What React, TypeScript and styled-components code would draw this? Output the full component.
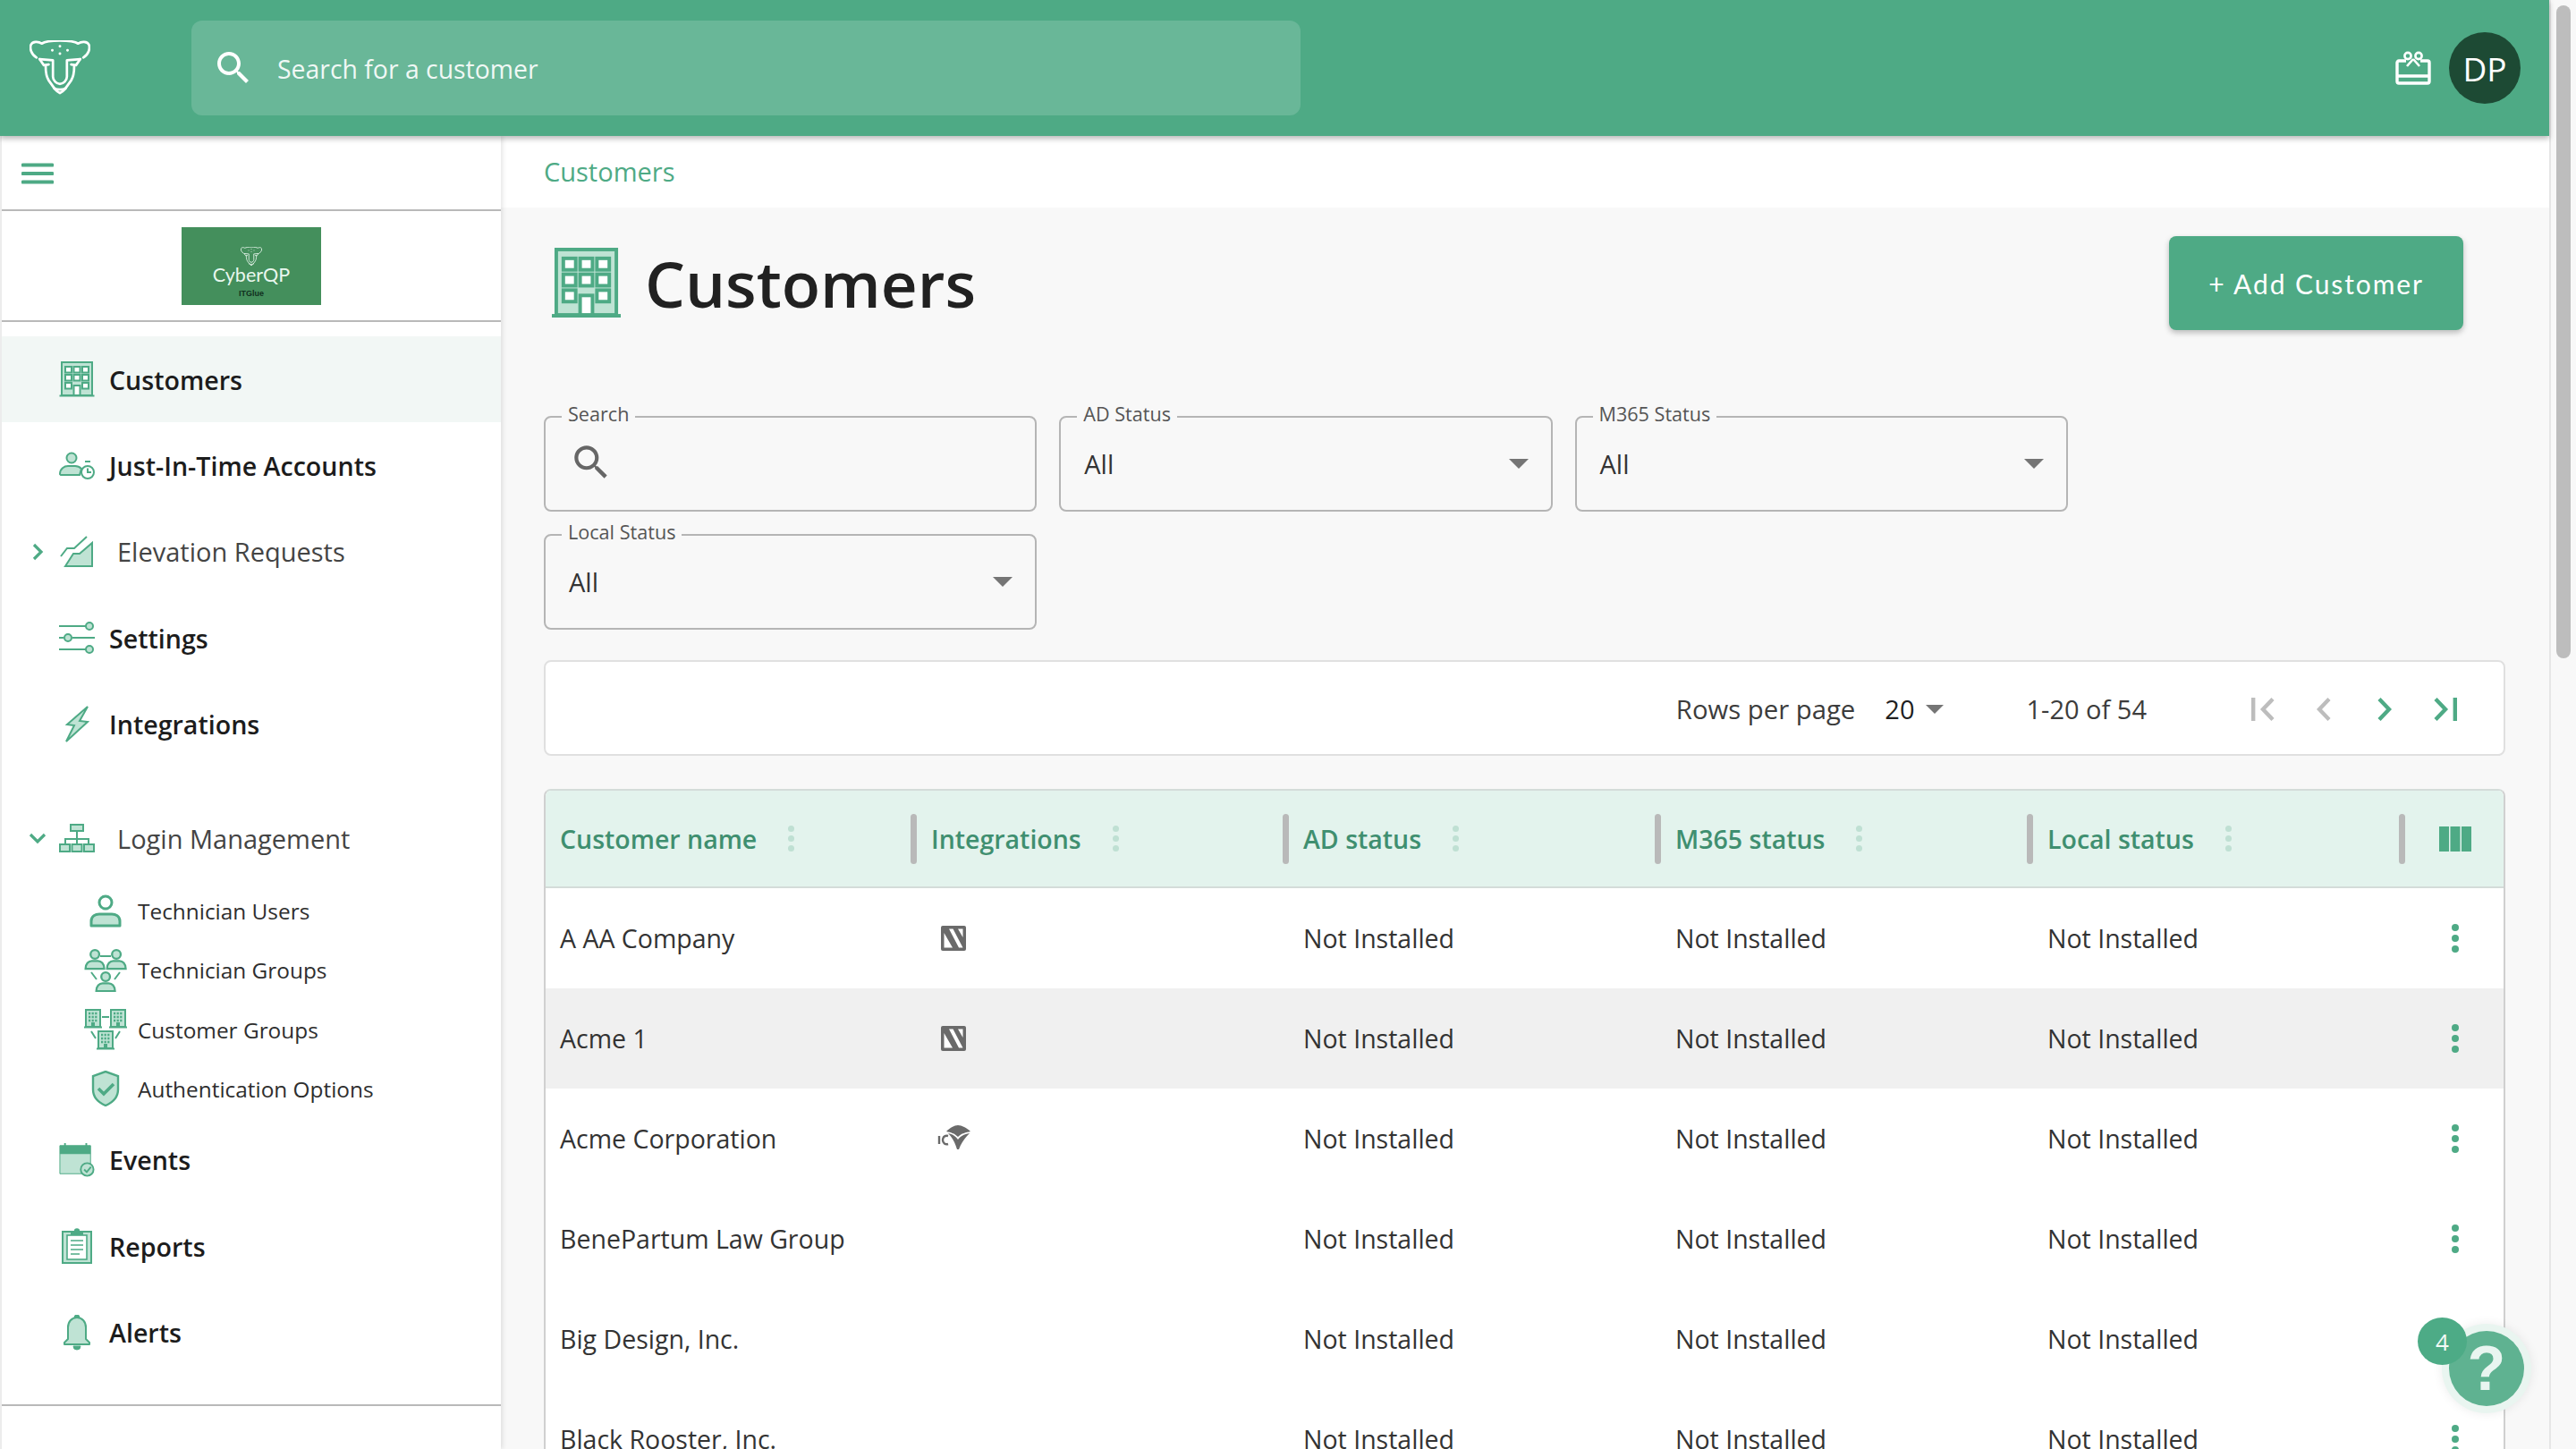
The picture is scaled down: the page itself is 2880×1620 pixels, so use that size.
import React from "react";
import styled, { createGlobalStyle } from "styled-components";

const GREEN = "#4eaa85";
const TINT = "#bfe3d4";

const Global = createGlobalStyle`
  html, body { margin: 0; padding: 0; width: 2880px; height: 1620px; overflow: hidden; background: #f8f8f8; }
  * { box-sizing: border-box; }
  body { font-family: "Open Sans", "Liberation Sans", sans-serif; }
`;

const Shell = styled.div`
  position: relative;
  display: flex;
  width: 2880px;
  height: 1620px;
  overflow: hidden;
`;
const Viewport = styled.div`
  width: 2850px;
  display: flex;
  flex-direction: column;
  height: 1620px;
`;
const ScrollTrack = styled.div`
  width: 30px;
  background: #f8f8f8;
  border-left: 2px solid #e6e6e6;
  padding: 6px 6px 0 6px;
`;
const ScrollThumb = styled.div`
  width: 16px;
  height: 730px;
  border-radius: 8px;
  background: #bdbdbd;
`;
const TopBar = styled.header`
  flex: 0 0 152px;
  height: 152px;
  background: ${GREEN};
  display: flex;
  align-items: center;
  padding: 0 32px 0 33px;
  box-shadow: 0 3px 6px rgba(0, 0, 0, 0.28);
  position: relative;
  z-index: 2;
`;
const LogoSlot = styled.div`
  width: 181px;
  display: flex;
`;
const SearchBar = styled.div`
  width: 1240px;
  height: 106px;
  background: #69b798;
  border-radius: 12px;
  display: flex;
  align-items: center;
  padding-left: 23px;
  gap: 25px;
  color: #fff;
  font-size: 28.4px;
  svg { flex: none; }
`;
const Placeholder = styled.span`
  color: rgba(255, 255, 255, 0.92);
  padding-top: 1px;
`;
const TopRight = styled.div`
  margin-left: auto;
  display: flex;
  align-items: center;
  gap: 20px;
`;
const Avatar = styled.div`
  width: 80px;
  height: 80px;
  border-radius: 50%;
  background: #1d4a34;
  color: #fff;
  font-size: 37px;
  font-weight: 500;
  display: flex;
  align-items: center;
  justify-content: center;
`;
const Body = styled.div`
  flex: 1;
  display: flex;
  min-height: 0;
`;
const Sidebar = styled.aside`
  width: 560px;
  flex: none;
  background: #fff;
  border-left: 2px solid #ececec;
  box-shadow: 2px 0 5px rgba(0, 0, 0, 0.1);
  position: relative;
  z-index: 1;
  display: flex;
  flex-direction: column;
`;
const MenuBar = styled.div`
  height: 82px;
  display: flex;
  align-items: center;
  padding: 2px 0 0 22px;
`;
const Rule = styled.hr<{ $top?: number }>`
  margin: ${(p) => p.$top ?? 0}px 0 0 0;
  border: 0;
  height: 2px;
  background: #b9b9b9;
  flex: none;
`;
const BrandBox = styled.div`
  height: 122px;
  display: flex;
  align-items: center;
  justify-content: center;
`;
const Brand = styled.div`
  width: 156px;
  height: 87px;
  background: #448f5c;
  display: flex;
  flex-direction: column;
  align-items: center;
  color: #fff;
  padding-top: 22px;
`;
const BrandName = styled.div`
  font-size: 21.5px;
  line-height: 18px;
  font-family: "Lato", sans-serif;
  color: #e9f7ee;
`;
const BrandSub = styled.div`
  font-family: "Liberation Sans", sans-serif;
  font-size: 9px;
  font-weight: 700;
  line-height: 10px;
  margin-top: 7px;
  color: #10301e;
`;
const Nav = styled.nav`
  margin-top: 16px;
  display: flex;
  flex-direction: column;
`;
const NavRow = styled.div<{ $active?: boolean; $top?: number }>`
  height: 96.4px;
  flex: none;
  display: flex;
  align-items: center;
  background: ${(p) => (p.$active ? "#f2f7f5" : "transparent")};
  margin-top: ${(p) => p.$top ?? 0}px;
`;
const ChevronSlot = styled.div`
  width: 64px;
  padding-left: 16px;
  display: flex;
  justify-content: center;
  flex: none;
`;
const IconSlot = styled.div`
  width: 40px;
  flex: none;
  display: flex;
  justify-content: center;
`;
const NavLabel = styled.span<{ $group?: boolean }>`
  margin-left: ${(p) => (p.$group ? 25 : 16)}px;
  font-size: ${(p) => (p.$group ? 29 : 28.6)}px;
  font-weight: ${(p) => (p.$group ? 500 : 600)};
  color: ${(p) => (p.$group ? "#444" : "#1c1c1c")};
  white-space: nowrap;
`;
const SubRow = styled.div`
  height: 66.3px;
  flex: none;
  display: flex;
  align-items: center;
  padding-left: 92px;
`;
const SubIconSlot = styled.div`
  width: 48px;
  flex: none;
  display: flex;
  justify-content: center;
`;
const SubLabel = styled.span`
  margin-left: 12px;
  font-size: 24.4px;
  color: #2e2e2e;
  white-space: nowrap;
`;
const Content = styled.main`
  flex: 1;
  min-width: 0;
  display: flex;
  flex-direction: column;
  overflow: hidden;
`;
const Crumbs = styled.div`
  height: 80px;
  flex: none;
  background: #fff;
  padding-left: 48px;
  display: flex;
  align-items: center;
  color: ${GREEN};
  font-size: 29px;
  font-weight: 500;
  line-height: 80px;
`;
const Page = styled.div`
  flex: 1;
  background: #f8f8f8;
  padding: 32px 49px 0 48px;
`;
const TitleRow = styled.div`
  height: 105px;
  display: flex;
  align-items: center;
  padding-left: 8px;
`;
const Title = styled.h1`
  margin: 0 0 0 26px;
  font-size: 71px;
  font-weight: 600;
  color: #212121;
  line-height: 1;
`;
const AddButton = styled.button`
  margin-left: auto;
  margin-right: 47px;
  width: 329px;
  height: 105px;
  border: 0;
  border-radius: 8px;
  background: ${GREEN};
  color: #fff;
  font-family: "Lato", sans-serif;
  font-size: 30px;
  letter-spacing: 1.9px;
  box-shadow: 0 3px 6px rgba(0, 0, 0, 0.25);
`;
const Filters = styled.div`
  margin-top: 96px;
  display: grid;
  grid-template-columns: repeat(3, 551.25px);
  grid-auto-rows: 107px;
  column-gap: 25px;
  row-gap: 25px;
`;
const Field = styled.div`
  position: relative;
  border: 2px solid #b5b5b5;
  border-radius: 8px;
  display: flex;
  align-items: center;
  padding: 0 25px 0 26px;
  font-size: 29px;
  color: #333;
`;
const FieldLabel = styled.span`
  position: absolute;
  left: 18px;
  top: -18px;
  padding: 0 7px;
  background: #f8f8f8;
  font-size: 21.6px;
  line-height: 28px;
  color: #555;
`;
const FieldArrow = styled.div`
  margin-left: auto;
  display: flex;
`;
const SearchGlyph = styled.div`
  margin-top: -4px;
  display: flex;
`;
const Pager = styled.div`
  margin-top: 34px;
  height: 107px;
  background: #fff;
  border: 2px solid #e0e0e0;
  border-radius: 8px;
  display: flex;
  align-items: center;
  justify-content: flex-end;
  padding: 2px 31px 0 0;
  font-size: 29.3px;
  font-weight: 500;
  color: #3c3c3c;
`;
const PerPage = styled.span`
  color: #1f1f1f;
  margin-left: 33px;
  font-size: 29px;
`;
const PerPageArrow = styled.div`
  display: flex;
  margin-left: 13px;
`;
const Range = styled.span`
  margin-left: 92px;
  margin-right: 96px;
  font-size: 29px;
`;
const PageButton = styled.div`
  width: 68px;
  display: flex;
  justify-content: center;
`;
const Table = styled.div`
  margin-top: 37px;
  border: 2px solid #d0d0d0;
  border-top-color: #d4dcd9;
  border-bottom: 0;
  border-radius: 8px 8px 0 0;
  background: #fff;
  overflow: hidden;
`;
const HeadRow = styled.div`
  height: 109px;
  display: grid;
  grid-template-columns: repeat(5, 416px) 1fr;
  background: #e3f3ed;
  border-bottom: 2px solid #d4dcd9;
`;
const HeadCell = styled.div<{ $first?: boolean }>`
  display: flex;
  align-items: center;
  padding-left: ${(p) => (p.$first ? 16 : 15)}px;
  color: #3f8f70;
  font-size: 28.5px;
  font-weight: 600;
`;
const HeadDots = styled.div`
  margin-left: 35px;
  display: flex;
  flex-direction: column;
  gap: 4px;
  i {
    display: block;
    width: 7px;
    height: 7px;
    border-radius: 50%;
    background: #bfe0d3;
  }
`;
const Divider = styled.div`
  margin-left: auto;
  margin-right: 1px;
  width: 7px;
  height: 56px;
  border-radius: 4px;
  background: #b9b9b9;
`;
const ColumnsCell = styled.div`
  display: flex;
  align-items: center;
  justify-content: center;
`;
const Row = styled.div<{ $hover?: boolean }>`
  height: 112px;
  display: grid;
  grid-template-columns: repeat(5, 416px) 1fr;
  align-items: center;
  background: ${(p) => (p.$hover ? "#f0f0f0" : "#fff")};
  color: #333;
  font-size: 28.5px;
`;
const Cell = styled.div<{ $first?: boolean }>`
  padding-left: ${(p) => (p.$first ? 16 : 15)}px;
  white-space: nowrap;
`;
const IntegrationCell = styled.div`
  padding-left: 26px;
  display: flex;
  height: 40px;
  align-items: center;
`;
const RowDots = styled.div`
  display: flex;
  flex-direction: column;
  align-items: center;
  gap: 4px;
  i {
    display: block;
    width: 8px;
    height: 8px;
    border-radius: 50%;
    background: ${GREEN};
  }
`;
const WingMark = styled.svg`
  margin: -3px 0 0 -4px;
`;
const Help = styled.div`
  position: absolute;
  left: 2738px;
  top: 1488px;
  width: 84px;
  height: 84px;
  border-radius: 50%;
  background: #5fb291;
  box-shadow: 0 0 0 8px #e9f5f0, 0 0 12px 8px rgba(0, 0, 0, 0.08);
  color: #e9f5f0;
  display: flex;
  align-items: center;
  justify-content: center;
  font-family: "Liberation Sans", sans-serif;
  font-weight: 700;
  font-size: 70px;
  z-index: 3;
`;
const HelpBadge = styled.div`
  position: absolute;
  left: 2703px;
  top: 1473px;
  width: 55px;
  height: 53px;
  border-radius: 50%;
  background: #4dab86;
  color: #f2faf6;
  display: flex;
  align-items: center;
  justify-content: center;
  font-size: 26px;
  z-index: 4;
`;

const S = { stroke: GREEN, strokeWidth: 2, fill: "none" } as const;
const F = { stroke: GREEN, strokeWidth: 2, fill: TINT } as const;

const Building = ({ size = 40 }: { size?: number }) => (
  <svg width={size} height={size} viewBox="0 0 40 40">
    <rect x="3" y="1" width="34" height="37" fill={TINT} stroke={GREEN} strokeWidth="2" />
    <rect x="0.5" y="37.5" width="39" height="2" fill={GREEN} />
    {[7, 16.5, 26].map((x) =>
      [6, 15, 24].map((y) =>
        x === 16.5 && y === 24 ? null : (
          <rect key={`${x}${y}`} x={x} y={y} width="7" height="6.5" fill="#fff" stroke={GREEN} strokeWidth="2" />
        )
      )
    )}
    <rect x="16.5" y="27" width="7" height="11" fill="#fff" stroke={GREEN} strokeWidth="2" />
  </svg>
);

const TimeUser = () => (
  <svg width="40" height="32" viewBox="0 0 40 32">
    <circle cx="14" cy="7" r="5.5" {...F} />
    <path d="M1 25c0-6 5-9 9-9h8c3 0 5 1 7 3l-2 7H2z" {...F} />
    <circle cx="32" cy="23" r="7" fill="#fff" stroke={GREEN} strokeWidth="2" />
    <path d="M32 18.5V23h4M29 11h6" {...S} />
  </svg>
);
const Chart = () => (
  <svg width="38" height="36" viewBox="0 0 38 36">
    <path d="M6 34l9-14h7l14-12v26z" {...F} />
    <path d="M1 23l7-9h8L30 1" {...S} />
  </svg>
);
const Sliders = () => (
  <svg width="40" height="36" viewBox="0 0 40 36">
    <path d="M0 5h30M0 18h5M15 18h25M0 31h30" {...S} />
    <circle cx="34" cy="5" r="4" {...F} />
    <circle cx="10" cy="18" r="4" {...F} />
    <circle cx="34" cy="31" r="4" {...F} />
  </svg>
);
const Bolt = () => (
  <svg width="28" height="42" viewBox="0 0 28 42">
    <path d="M26 1L3 21l8 1-9 18 24-22-9-1z" {...F} />
  </svg>
);
const Org = () => (
  <svg width="40" height="32" viewBox="0 0 40 32">
    <rect x="13" y="1" width="14" height="7" {...F} />
    <path d="M20 8v8M7 22v-5h26v5M20 16v6" {...S} />
    <rect x="1" y="23" width="11" height="8" {...F} />
    <rect x="14.5" y="23" width="11" height="8" {...F} />
    <rect x="28" y="23" width="11" height="8" {...F} />
  </svg>
);
const User = () => (
  <svg width="36" height="37" viewBox="0 0 36 37">
    <circle cx="18" cy="9" r="7" fill="none" stroke={GREEN} strokeWidth="3" />
    <path d="M2 35v-5c0-6 5-8 9-8h14c4 0 9 2 9 8v5z" fill={TINT} stroke={GREEN} strokeWidth="3" strokeLinejoin="round" />
  </svg>
);
const MiniPerson = ({ x, y }: { x: number; y: number }) => (
  <g transform={`translate(${x} ${y}) scale(1.16)`}>
    <circle cx="10" cy="5.2" r="4.2" {...F} />
    <path d="M1 19c0-5 3-7.5 6-7.5h6c3 0 6 2.5 6 7.5z" {...F} />
  </g>
);
const People = () => (
  <svg width="48" height="48" viewBox="0 0 48 48">
    <MiniPerson x={0.5} y={0} />
    <MiniPerson x={24.5} y={0} />
    <MiniPerson x={12.5} y={25} />
    <path d="M18 8h12M8 26l6 8M40 26l-6 8" {...S} />
  </svg>
);
const MiniBuilding = ({ x, y }: { x: number; y: number }) => (
  <g transform={`translate(${x} ${y})`}>
    <rect x="2" y="1" width="16" height="19" {...F} />
    <path d="M5 5h10M5 9h10M5 13h10" stroke={GREEN} strokeWidth="2.4" strokeDasharray="2.2 1.4" />
    <path d="M0 20.5h20" {...S} />
    <rect x="8" y="15" width="4" height="5" fill={GREEN} />
  </g>
);
const Buildings = () => (
  <svg width="48" height="46" viewBox="0 0 48 46">
    <MiniBuilding x={0} y={0} />
    <MiniBuilding x={28} y={0} />
    <MiniBuilding x={14} y={24} />
    <path d="M20 9h8M8 25l5 8M40 25l-5 8" {...S} />
  </svg>
);
const Shield = () => (
  <svg width="32" height="40" viewBox="0 0 32 40">
    <path d="M16 1l14 5v15c0 9-7 15-14 18C9 36 2 30 2 21V6z" fill={TINT} stroke={GREEN} strokeWidth="2.4" />
    <path d="M8 20l6 6 11-11" fill="none" stroke={GREEN} strokeWidth="3.6" />
  </svg>
);
const Calendar = () => (
  <svg width="42" height="40" viewBox="0 0 42 40">
    <path d="M1 3h36v33H1z" fill={TINT} stroke={GREEN} strokeWidth="1" />
    <path d="M1 3h36v10H1z" fill={GREEN} />
    <path d="M7 0v4M32 0v4" stroke={GREEN} strokeWidth="2" />
    <circle cx="33" cy="31" r="7.5" fill={TINT} stroke={GREEN} strokeWidth="2" />
    <path d="M29.5 31l3 3 5-6" {...S} />
  </svg>
);
const Clipboard = () => (
  <svg width="34" height="40" viewBox="0 0 34 40">
    <rect x="1" y="4" width="32" height="35" fill={TINT} stroke={GREEN} strokeWidth="2" />
    <rect x="6" y="8" width="22" height="27" fill="#fff" stroke={GREEN} strokeWidth="1.6" />
    <path d="M10 4h14v4H10z" fill={GREEN} />
    <circle cx="17" cy="3.5" r="3.2" fill={GREEN} />
    <path d="M10 14h14M10 19h14M10 24h14M10 29h10" stroke={GREEN} strokeWidth="1.6" />
  </svg>
);
const Bell = () => (
  <svg width="30" height="40" viewBox="0 0 30 40">
    <path d="M15 3c-6 0-10 5-10 11v13l-4 4v2h28v-2l-4-4V14C25 8 21 3 15 3z" fill={TINT} stroke={GREEN} strokeWidth="2" strokeLinejoin="round" />
    <path d="M12 3a3 3 0 016 0M11 35h8a4 4 0 01-8 0z" fill={GREEN} stroke={GREEN} />
  </svg>
);
const Chevron = ({ open }: { open?: boolean }) => (
  <svg width="20" height="20" viewBox="0 0 20 20">
    <path d={open ? "M2 6l8 8 8-8" : "M6 2l8 8-8 8"} fill="none" stroke={GREEN} strokeWidth="3.2" />
  </svg>
);
const SearchIcon = ({ size, color }: { size: number; color: string }) => (
  <svg width={size} height={size} viewBox="0 0 24 24" fill={color}>
    <path d="M15.5 14h-.79l-.28-.27C15.41 12.59 16 11.11 16 9.5 16 5.91 13.09 3 9.5 3S3 5.91 3 9.5 5.91 16 9.5 16c1.61 0 3.09-.59 4.23-1.57l.27.28v.79l5 4.99L20.49 19l-4.99-5zm-6 0C7.01 14 5 11.99 5 9.5S7.01 5 9.5 5 14 7.01 14 9.5 11.99 14 9.5 14z" />
  </svg>
);
const Caret = ({ w = 22 }: { w?: number }) => (
  <svg width={w} height={w / 2} viewBox="0 0 22 11">
    <path d="M0 0h22L11 11z" fill="#757575" />
  </svg>
);
const Hamburger = () => (
  <svg width="36" height="24" viewBox="0 0 36 24">
    <path d="M1.5 2.5h33M1.5 12h33M1.5 21.5h33" stroke={GREEN} strokeWidth="4" strokeLinecap="round" />
  </svg>
);
const HeadLogo = ({ w, color = "#fff", sw = 8 }: { w: number; color?: string; sw?: number }) => (
  <svg width={w} height={(w * 185) / 200} viewBox="25 40 200 185" fill="none" stroke={color} strokeWidth={sw} strokeLinecap="round" strokeLinejoin="round">
    <path d="M48 97C30 86 25 66 30 54c5-10 24-11 35-3 20-13 100-13 120 0 11-8 30-7 35 3 5 12 0 32-18 43" />
    <path d="M58 102l44 4v54c0 12 12 24 23 24s23-12 23-24v-54l44-4" />
    <path d="M58 102l14 20 16-2M192 102l-14 20-16-2" />
    <path d="M78 124c0 18 2 36 10 48l20 28c5 6 9 10 17 14 8-4 12-8 17-14l20-28c8-12 10-30 10-48" />
    <path d="M106 198c6 3 12 4 19 4s13-1 19-4" />
    <path d="M125 60v.1M100 73v.1M150 73v.1M125 84v.1" strokeWidth={sw * 1.1} />
  </svg>
);
const Gift = () => (
  <svg width="40" height="38" viewBox="0 0 40 38" fill="none" stroke="#fff" strokeWidth="3.4" strokeLinejoin="round">
    <path d="M12 11H4a2 2 0 00-2 2v21a2 2 0 002 2h32a2 2 0 002-2V13a2 2 0 00-2-2h-8" />
    <path d="M2 28h36" />
    <circle cx="14" cy="5.5" r="3.6" strokeWidth="2.6" />
    <circle cx="26" cy="5.5" r="3.6" strokeWidth="2.6" />
    <path d="M20 9l-7 8M20 9l7 8" strokeWidth="2.6" />
  </svg>
);
const PageIcon = ({ d, muted, w, bar }: { d: string; muted?: boolean; w: number; bar?: number }) => (
  <svg width={w} height="26" viewBox={`0 0 ${w} 26`} fill="none" stroke={muted ? "#bdbdbd" : GREEN} strokeWidth="4.4">
    <path d={d} />
    {bar !== undefined && <path d={`M${bar} 0v26`} />}
  </svg>
);
const ColumnsIcon = () => (
  <svg width="36" height="28" viewBox="0 0 36 28" fill={GREEN}>
    <rect x="0" width="11" height="28" />
    <rect x="12.5" width="11" height="28" />
    <rect x="25" width="11" height="28" />
  </svg>
);
const Logo365 = () => (
  <svg width="28" height="28" viewBox="0 0 28 28">
    <rect width="28" height="28" rx="2" fill="#6a6a6a" />
    <path d="M3.5 8L13 24.5H3.5zM9 3.5h4.5L24.5 24.5H20zM19 3.5h5.5V13z" fill="#fff" />
  </svg>
);
const LogoWing = () => (
  <WingMark width="37" height="27" viewBox="0 0 37 27" fill="#6a6a6a">
    <path d="M10 7c4-4 9-7 13-7s10 3 14 7c-5 1-10 2-14 6-4-4-8-5-13-6z" />
    <path d="M12 9c5 1 8 3 11 7 3-4 7-6 13-7-5 5-9 10-12 18h-2c-2-7-5-13-10-18z" />
    <path d="M2 12v9" stroke="#6a6a6a" strokeWidth="2.4" fill="none" />
    <path d="M12 12c-3-1-6 1-6 4.5s3 5.5 6 4.5" stroke="#6a6a6a" strokeWidth="2.4" fill="none" />
  </WingMark>
);

const HEADS = ["Customer name", "Integrations", "AD status", "M365 status", "Local status"];
const ROWS: { name: string; logo?: "ms" | "wing"; hover?: boolean }[] = [
  { name: "A AA Company", logo: "ms" },
  { name: "Acme 1", logo: "ms", hover: true },
  { name: "Acme Corporation", logo: "wing" },
  { name: "BenePartum Law Group" },
  { name: "Big Design, Inc." },
  { name: "Black Rooster, Inc." },
];

export default function App() {
  return (
    <Shell>
      <Global />
      <Viewport>
        <TopBar>
          <LogoSlot>
            <HeadLogo w={68} />
          </LogoSlot>
          <SearchBar>
            <SearchIcon size={48} color="#fff" />
            <Placeholder>Search for a customer</Placeholder>
          </SearchBar>
          <TopRight>
            <Gift />
            <Avatar>DP</Avatar>
          </TopRight>
        </TopBar>
        <Body>
          <Sidebar>
            <MenuBar>
              <Hamburger />
            </MenuBar>
            <Rule />
            <BrandBox>
              <Brand>
                <HeadLogo w={24} sw={7} color="#e9f7ee" />
                <BrandName>CyberQP</BrandName>
                <BrandSub>ITGlue</BrandSub>
              </Brand>
            </BrandBox>
            <Rule />
            <Nav>
              <NavRow $active>
                <ChevronSlot />
                <IconSlot><Building /></IconSlot>
                <NavLabel>Customers</NavLabel>
              </NavRow>
              <NavRow>
                <ChevronSlot />
                <IconSlot><TimeUser /></IconSlot>
                <NavLabel>Just-In-Time Accounts</NavLabel>
              </NavRow>
              <NavRow>
                <ChevronSlot><Chevron /></ChevronSlot>
                <IconSlot><Chart /></IconSlot>
                <NavLabel $group>Elevation Requests</NavLabel>
              </NavRow>
              <NavRow>
                <ChevronSlot />
                <IconSlot><Sliders /></IconSlot>
                <NavLabel>Settings</NavLabel>
              </NavRow>
              <NavRow>
                <ChevronSlot />
                <IconSlot><Bolt /></IconSlot>
                <NavLabel>Integrations</NavLabel>
              </NavRow>
              <NavRow $top={31}>
                <ChevronSlot><Chevron open /></ChevronSlot>
                <IconSlot><Org /></IconSlot>
                <NavLabel $group>Login Management</NavLabel>
              </NavRow>
              <SubRow>
                <SubIconSlot><User /></SubIconSlot>
                <SubLabel>Technician Users</SubLabel>
              </SubRow>
              <SubRow>
                <SubIconSlot><People /></SubIconSlot>
                <SubLabel>Technician Groups</SubLabel>
              </SubRow>
              <SubRow>
                <SubIconSlot><Buildings /></SubIconSlot>
                <SubLabel>Customer Groups</SubLabel>
              </SubRow>
              <SubRow>
                <SubIconSlot><Shield /></SubIconSlot>
                <SubLabel>Authentication Options</SubLabel>
              </SubRow>
              <NavRow $top={-2}>
                <ChevronSlot />
                <IconSlot><Calendar /></IconSlot>
                <NavLabel>Events</NavLabel>
              </NavRow>
              <NavRow>
                <ChevronSlot />
                <IconSlot><Clipboard /></IconSlot>
                <NavLabel>Reports</NavLabel>
              </NavRow>
              <NavRow>
                <ChevronSlot />
                <IconSlot><Bell /></IconSlot>
                <NavLabel>Alerts</NavLabel>
              </NavRow>
            </Nav>
            <Rule $top={32} />
          </Sidebar>
          <Content>
            <Crumbs>Customers</Crumbs>
            <Page>
              <TitleRow>
                <Building size={79} />
                <Title>Customers</Title>
                <AddButton>+ Add Customer</AddButton>
              </TitleRow>
              <Filters>
                <Field>
                  <FieldLabel>Search</FieldLabel>
                  <SearchGlyph><SearchIcon size={50} color="#666" /></SearchGlyph>
                </Field>
                <Field>
                  <FieldLabel>AD Status</FieldLabel>
                  All
                  <FieldArrow><Caret /></FieldArrow>
                </Field>
                <Field>
                  <FieldLabel>M365 Status</FieldLabel>
                  All
                  <FieldArrow><Caret /></FieldArrow>
                </Field>
                <Field>
                  <FieldLabel>Local Status</FieldLabel>
                  All
                  <FieldArrow><Caret /></FieldArrow>
                </Field>
              </Filters>
              <Pager>
                Rows per page
                <PerPage>20</PerPage>
                <PerPageArrow><Caret w={20} /></PerPageArrow>
                <Range>1-20 of 54</Range>
                <PageButton><PageIcon muted w={26} bar={2.2} d="M24 1.5L13 13l11 11.5" /></PageButton>
                <PageButton><PageIcon muted w={16} d="M14 1.5L3 13l11 11.5" /></PageButton>
                <PageButton><PageIcon w={16} d="M2 1.5L13 13 2 24.5" /></PageButton>
                <PageButton><PageIcon w={26} bar={23.8} d="M2 1.5L13 13 2 24.5" /></PageButton>
              </Pager>
              <Table>
                <HeadRow>
                  {HEADS.map((h, i) => (
                    <HeadCell key={h} $first={i === 0}>
                      {h}
                      <HeadDots><i /><i /><i /></HeadDots>
                      <Divider />
                    </HeadCell>
                  ))}
                  <ColumnsCell><ColumnsIcon /></ColumnsCell>
                </HeadRow>
                {ROWS.map((r) => (
                  <Row key={r.name} $hover={r.hover}>
                    <Cell $first>{r.name}</Cell>
                    <IntegrationCell>
                      {r.logo === "ms" && <Logo365 />}
                      {r.logo === "wing" && <LogoWing />}
                    </IntegrationCell>
                    <Cell>Not Installed</Cell>
                    <Cell>Not Installed</Cell>
                    <Cell>Not Installed</Cell>
                    <RowDots><i /><i /><i /></RowDots>
                  </Row>
                ))}
              </Table>
            </Page>
          </Content>
        </Body>
      </Viewport>
      <ScrollTrack>
        <ScrollThumb />
      </ScrollTrack>
      <Help>?</Help>
      <HelpBadge>4</HelpBadge>
    </Shell>
  );
}
